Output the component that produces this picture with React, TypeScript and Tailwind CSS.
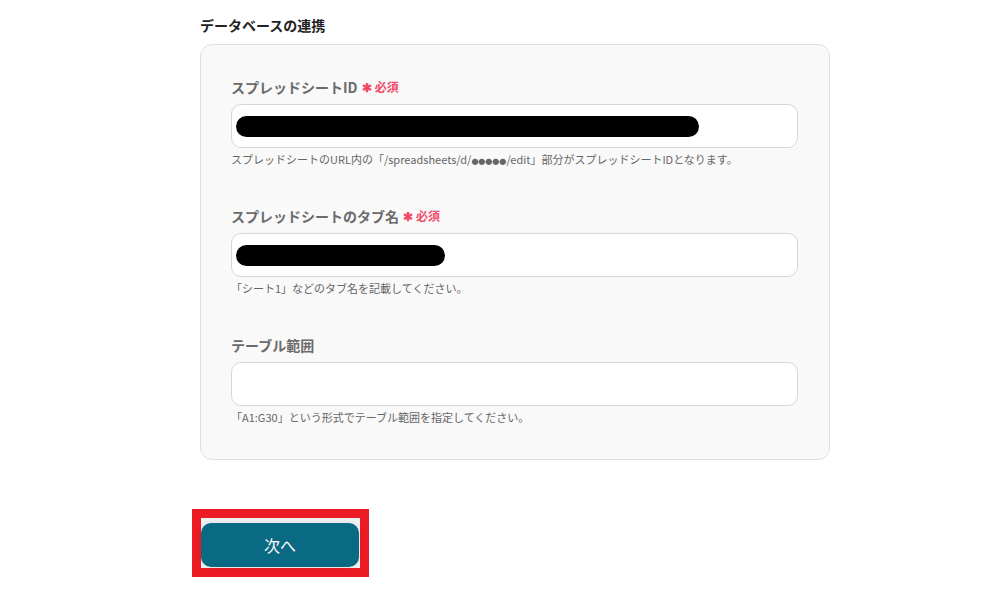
const fields = [
  {
    label: "スプレッドシートID",
    required: true,
    redact: 463,
    help: (
      <>
        スプレッドシートのURL内の「/spreadsheets/d/<span className="text-[7px] leading-none">●●●●●</span>/edit」部分がスプレッドシートIDとなります。
      </>
    ),
  },
  {
    label: "スプレッドシートのタブ名",
    required: true,
    redact: 209,
    help: <>「シート1」などのタブ名を記載してください。</>,
  },
  {
    label: "テーブル範囲",
    required: false,
    redact: 0,
    help: <>「A1:G30」という形式でテーブル範囲を指定してください。</>,
  },
];

export default function App() {
  return (
    <div
      className="min-h-[597px] w-[1008px] bg-white"
      style={{ fontFamily: '"Noto Sans CJK JP", "Noto Sans", sans-serif' }}
    >
      <div className="ml-[200px] w-[630px] pt-[14px]">
        <h2 className="text-[14px] leading-[22px] font-bold text-[#222]">データベースの連携</h2>

        <div className="mt-[8px] rounded-[12px] border border-[#dcdfe4] bg-[#f9f9f9] pl-[30px] pr-[31px] pt-[32px] pb-[34px]">
          {fields.map((f, i) => (
            <div key={i} className={i > 0 ? "mt-[39px]" : ""}>
              <div className="flex h-[20px] items-center">
                <span className="text-[14px] font-bold text-[#6b6b6b]">{f.label}</span>
                {f.required && (
                  <span className="ml-[4px] flex items-center text-[12px] font-bold text-[#f04b6a]">
                    <span className="mr-[3px] text-[12px] leading-none">✱</span>必須
                  </span>
                )}
              </div>
              <div className="mt-[7px] flex h-[44px] items-center rounded-[10px] border border-[#d3d6db] bg-white pl-[4px]">
                {f.redact > 0 && (
                  <div className="h-[21px] rounded-full bg-black" style={{ width: f.redact }} />
                )}
              </div>
              <p className="mt-[3px] h-[16px] overflow-hidden text-[11px] leading-[16px] text-[#666]">{f.help}</p>
            </div>
          ))}
        </div>

        <div className="mt-[49px] ml-[-8px] w-[177px] border-[9px] border-[#ed1c24] bg-[#f1f2f4] pt-[5px] pb-[1px]">
          <button className="flex h-[44px] w-[158px] items-center justify-center rounded-[10px] bg-[#0b6a83] text-[16px] text-white shadow-[0_0_8px_rgba(0,0,0,0.08)]">
            次へ
          </button>
        </div>
      </div>
    </div>
  );
}
